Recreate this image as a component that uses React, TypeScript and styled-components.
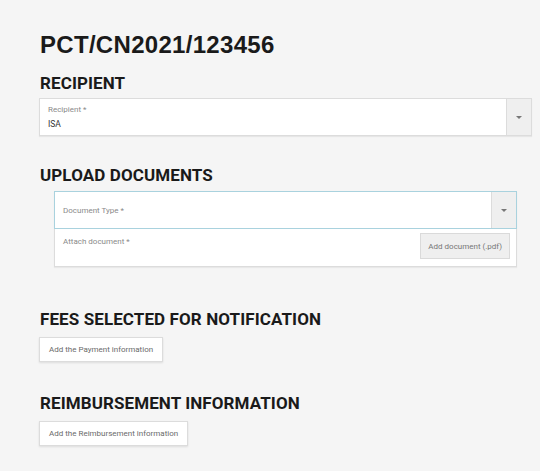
import React from "react";
import styled, { createGlobalStyle } from "styled-components";

const Global = createGlobalStyle`
  html, body { margin: 0; padding: 0; background: #f5f5f5; }
  body { font-family: "Roboto", "Liberation Sans", sans-serif; }
`;

const Page = styled.div`
  width: 540px;
  height: 471px;
  box-sizing: border-box;
  padding: 31px 8px 0 39px;
  overflow: hidden;
`;

const Title = styled.h1`
  margin: 0 0 0 1px;
  font-family: "Liberation Sans", sans-serif;
  font-weight: 700;
  font-size: 24px;
  line-height: 28px;
  letter-spacing: 0.3px;
  color: #1a1a1a;
`;

const Heading = styled.h2<{ $top: number }>`
  margin: ${(p) => p.$top}px 0 0 1px;
  font-family: "Roboto", sans-serif;
  font-weight: 700;
  font-size: 17px;
  line-height: 20px;
  letter-spacing: 0.1px;
  color: #1a1a1a;
`;

const Select = styled.div<{ $accent?: boolean; $top: number }>`
  display: flex;
  height: 38px;
  box-sizing: border-box;
  margin: ${(p) => (p.$accent ? "-1px -1px 0" : `${p.$top}px 0 0`)};
  background: #fff;
  border: 1px solid ${(p) => (p.$accent ? "#a9d2de" : "#dcdcdc")};
  box-shadow: ${(p) => (p.$accent ? "none" : "0 1px 1px rgba(0,0,0,0.06)")};
`;

const SelectBody = styled.div<{ $center?: boolean }>`
  flex: 1;
  display: flex;
  flex-direction: column;
  justify-content: ${(p) => (p.$center ? "center" : "flex-start")};
  padding: ${(p) => (p.$center ? "0 8px" : "5px 8px 0")};
`;

const Label = styled.div`
  font-size: 8px;
  line-height: 11px;
  color: #8a8a8a;
`;

const Value = styled.div`
  font-size: 8.5px;
  line-height: 12px;
  color: #333;
  margin-top: 3px;
`;

const Arrow = styled.div`
  width: 24px;
  display: flex;
  align-items: center;
  justify-content: center;
  background: #efefef;
  border-left: 1px solid #dcdcdc;
  &::after {
    content: "";
    border-left: 3px solid transparent;
    border-right: 3px solid transparent;
    border-top: 3px solid #777;
  }
`;

const UploadCard = styled.div`
  margin: 6px 15px 0 15px;
  background: #fff;
  border: 1px solid #dcdcdc;
  box-shadow: 0 1px 1px rgba(0,0,0,0.05);
  display: flex;
  flex-direction: column;
`;

const AttachRow = styled.div`
  display: flex;
  justify-content: space-between;
  align-items: flex-start;
  height: 37px;
  padding: 4px 6px 0 8px;
  box-sizing: border-box;
`;

const AttachLabel = styled(Label)`
  margin-top: 3px;
`;

const GreyButton = styled.button`
  height: 26px;
  padding: 0 7px;
  border: 1px solid #dadada;
  background: #efefef;
  color: #777;
  font-family: "Roboto", sans-serif;
  font-size: 8px;
  cursor: pointer;
`;

const WhiteButton = styled.button<{ $top: number }>`
  display: block;
  margin-top: ${(p) => p.$top}px;
  height: 25px;
  padding: 0 9px;
  border: 1px solid #dcdcdc;
  background: #fff;
  box-shadow: 0 1px 2px rgba(0,0,0,0.1);
  color: #6a6a6a;
  font-family: "Roboto", sans-serif;
  font-size: 8px;
  cursor: pointer;
`;

export default function App() {
  return (
    <>
      <Global />
      <Page>
        <Title>PCT/CN2021/123456</Title>
        <Heading $top={14}>RECIPIENT</Heading>
        <Select $top={5}>
          <SelectBody>
            <Label>Recipient *</Label>
            <Value>ISA</Value>
          </SelectBody>
          <Arrow />
        </Select>
        <Heading $top={29}>UPLOAD DOCUMENTS</Heading>
        <UploadCard>
          <Select $accent $top={0}>
            <SelectBody $center>
              <Label>Document Type *</Label>
            </SelectBody>
            <Arrow />
          </Select>
          <AttachRow>
            <AttachLabel>Attach document *</AttachLabel>
            <GreyButton>Add document (.pdf)</GreyButton>
          </AttachRow>
        </UploadCard>
        <Heading $top={42}>FEES SELECTED FOR NOTIFICATION</Heading>
        <WhiteButton $top={8}>Add the Payment information</WhiteButton>
        <Heading $top={31}>REIMBURSEMENT INFORMATION</Heading>
        <WhiteButton $top={8}>Add the Reimbursement information</WhiteButton>
      </Page>
    </>
  );
}
